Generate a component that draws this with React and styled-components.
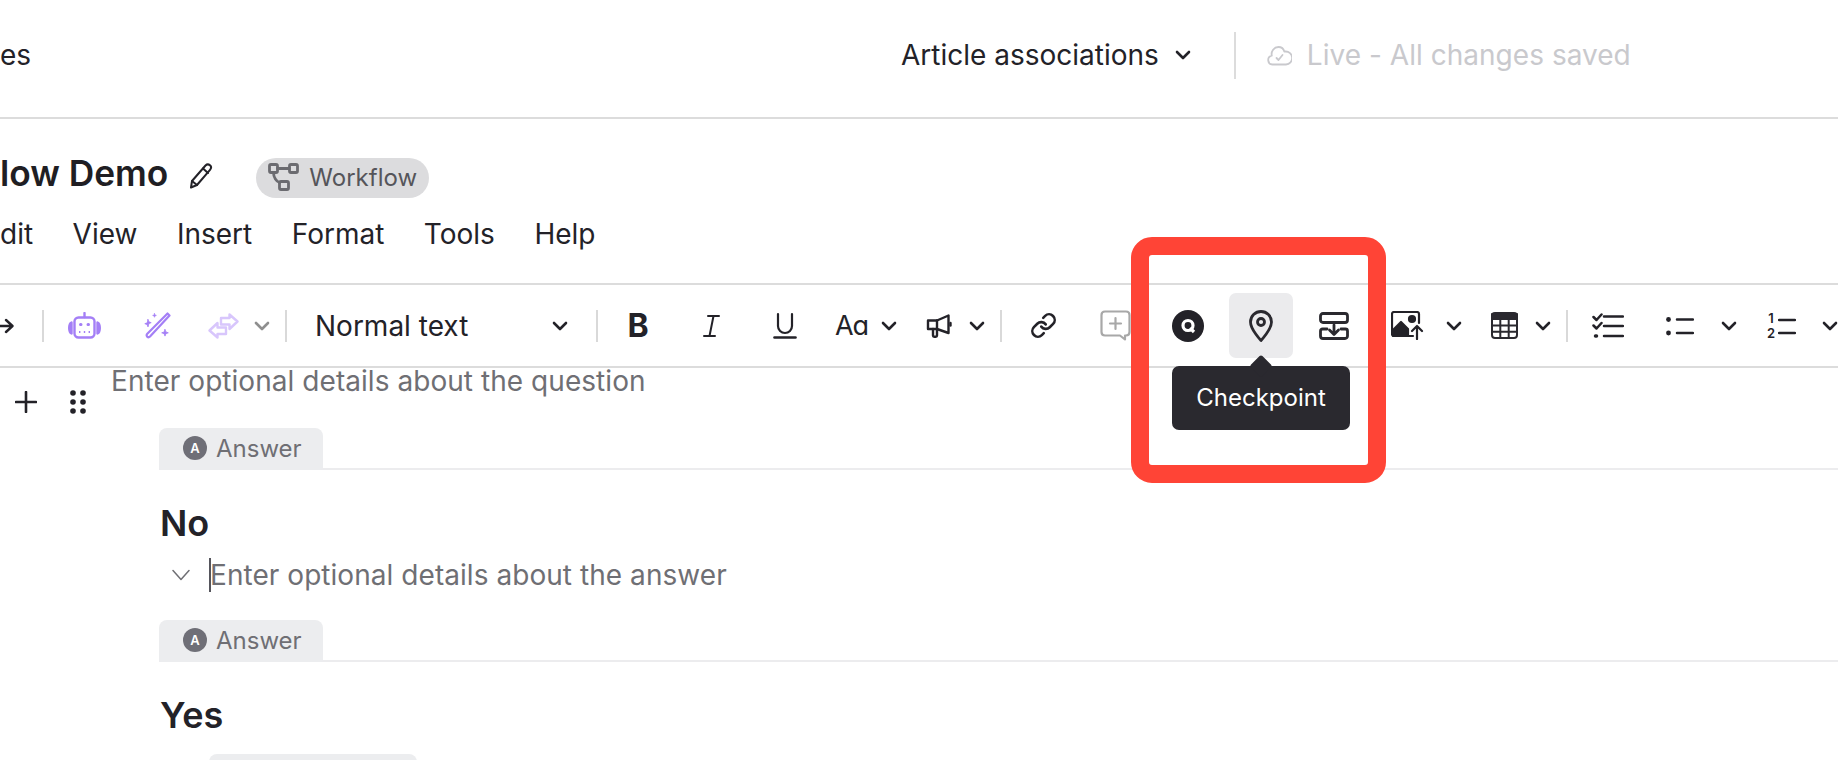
import React from "react";
import styled, { createGlobalStyle } from "styled-components";

const Global = createGlobalStyle`
  html, body { margin: 0; padding: 0; background: #fff; }
  body { font-family: Inter, "Noto Sans", sans-serif; color: #232228; }
`;

const Page = styled.div`
  position: relative;
  width: 1838px;
  height: 760px;
  overflow: hidden;
  background: #fff;
`;

const TopBar = styled.header`
  height: 117px;
  box-sizing: content-box;
  border-bottom: 2px solid #dcdcdc;
  display: flex;
  align-items: center;
`;
const TopInner = styled.div`
  display: flex;
  align-items: center;
  width: 100%;
  margin-top: -7px;
`;
const Crumb = styled.div`
  font-size: 28px;
  width: 901px;
  flex: none;
  color: #232228;
`;
const AssocLabel = styled.span`
  font-size: 28px;
`;
const TopDivider = styled.span`
  width: 2px;
  height: 47px;
  background: #dcdcdc;
  margin-left: 43px;
  margin-right: 31px;
`;
const LiveText = styled.span`
  font-size: 28px;
  color: #c9c9cd;
  margin-left: 15px;
  letter-spacing: 0.03px;
`;

const TitleBlock = styled.section`
  height: 164px;
  display: flex;
  flex-direction: column;
  border-bottom: 2px solid #dcdcdc;
`;
const TitleRow = styled.div`
  display: flex;
  align-items: center;
  height: 40px;
  margin-top: 39px;
`;
const Title = styled.h1`
  margin: -9px 0 0 0;
  font-size: 35.3px;
  font-weight: 600;
  color: #1f1e23;
  white-space: nowrap;
`;
const PencilWrap = styled.span`
  display: flex;
  margin-left: 21px;
  margin-top: -5px;
`;
const Pill = styled.span`
  display: inline-flex;
  align-items: center;
  height: 40px;
  width: 173px;
  box-sizing: border-box;
  margin-left: 43px;
  padding: 0 0 2px 12px;
  gap: 10px;
  border-radius: 20px;
  background: #dcdcde;
  color: #55555a;
  font-size: 24px;
`;
const MenuRow = styled.nav`
  display: flex;
  margin-top: 19px;
  font-size: 28px;
  gap: 39.5px;
  color: #232228;
`;

const Toolbar = styled.div`
  height: 83px;
  box-sizing: border-box;
  display: flex;
  align-items: center;
  border-bottom: 2px solid #dcdcdc;
`;
const Cell = styled.span`
  flex: none;
  width: ${p => p.$w}px;
  margin-left: ${p => p.$ml || 0}px;
  height: 40px;
  display: flex;
  align-items: center;
  justify-content: ${p => (p.$start ? "flex-start" : "center")};
  color: #232228;
  svg { flex: none; display: block; }
`;
const ActiveCell = styled.span`
  flex: none;
  position: relative;
  width: 64px;
  height: 65px;
  display: flex;
  align-items: center;
  justify-content: center;
  border-radius: 7px;
  background: #ebebed;
`;
const Sep = styled.span`
  flex: none;
  width: 2px;
  height: 32px;
  background: #d9d9d9;
  margin-left: ${p => p.$ml || 0}px;
`;
const StyleSelect = styled.span`
  flex: none;
  width: 309px;
  box-sizing: border-box;
  padding: 0 28px;
  display: flex;
  align-items: center;
  justify-content: space-between;
  font-size: 28px;
  color: #232228;
`;
const GlyphB = styled.span`
  font-size: 32px;
  font-weight: 700;
`;
const Case = styled.span`
  font-size: 27px;
  letter-spacing: -1px;
  color: #232228;
`;
const NumSmall = styled.span`
  font-size: 13px;
  font-weight: 600;
  line-height: 15px;
  display: flex;
  flex-direction: column;
  align-items: center;
  margin-right: 3px;
`;

const Tooltip = styled.div`
  position: absolute;
  left: -57px;
  top: 73px;
  width: 178px;
  height: 64px;
  box-sizing: border-box;
  padding-bottom: 2px;
  border-radius: 7px;
  background: #2a292f;
  color: #fff;
  font-size: 24px;
  display: flex;
  align-items: center;
  justify-content: center;
  z-index: 3;
  &::before {
    content: "";
    position: absolute;
    left: 81px;
    top: -8px;
    width: 16px;
    height: 16px;
    background: #2a292f;
    transform: rotate(45deg);
    border-radius: 2px;
  }
`;
const Highlight = styled.div`
  position: absolute;
  left: 1131px;
  top: 237px;
  width: 255px;
  height: 246px;
  box-sizing: border-box;
  border: 18px solid #ff4436;
  border-radius: 21px;
  z-index: 4;
  pointer-events: none;
`;

const QuestionRow = styled.div`
  display: flex;
  height: 60px;
`;
const Gutter = styled.div`
  width: 111px;
  flex: none;
  display: flex;
  align-items: center;
  align-self: flex-start;
  padding: 22px 0 0 15px;
  box-sizing: border-box;
  gap: 33px;
`;
const Placeholder = styled.div`
  font-size: 28px;
  letter-spacing: 0.05px;
  color: #6f6f74;
  line-height: 26px;
  white-space: nowrap;
`;
const AnswerHead = styled.div`
  display: flex;
  margin-left: 159px;
  border-bottom: 2px solid #ececee;
  height: 42px;
  box-sizing: border-box;
  margin-top: ${p => p.$mt || 0}px;
`;
const AnswerTab = styled.div`
  width: 164px;
  height: 42px;
  flex: none;
  box-sizing: border-box;
  padding: 0 0 2px 24px;
  gap: 9px;
  display: flex;
  align-items: center;
  background: #ecedef;
  border-radius: 8px 8px 2px 2px;
  color: #6f6f74;
  font-size: 24px;
`;
const AnswerBadge = styled.span`
  width: 24px;
  height: 24px;
  border-radius: 50%;
  background: #6f6f77;
  color: #fff;
  font-size: 13px;
  font-weight: 600;
  display: flex;
  align-items: center;
  justify-content: center;
`;
const AnswerTitle = styled.h2`
  margin: ${p => p.$mt}px 0 0 160px;
  font-size: 36px;
  line-height: 40px;
  font-weight: 600;
  color: #232228;
`;
const DetailRow = styled.div`
  display: flex;
  align-items: center;
  height: 36px;
  margin: 14px 0 0 172px;
`;
const Caret = styled.span`
  width: 2px;
  height: 34px;
  background: #55555c;
  margin: 0 -1px 0 19px;
`;
const StubRow = styled.div`
  margin: 19px 0 0 209px;
  width: 208px;
  height: 30px;
  border-radius: 8px 8px 0 0;
  background: #ecedef;
`;

const Svg = ({ w, h, children, color = "currentColor", sw = 2.4, fill = "none", vb }) => (
  <svg width={w} height={h} viewBox={vb || `0 0 ${w} ${h}`} fill={fill} stroke={color} strokeWidth={sw} strokeLinecap="round" strokeLinejoin="round">{children}</svg>
);
const Chevron = ({ color }) => (
  <Svg w={16} h={10} color={color} sw={2.6}><path d="M2 2l6 6 6-6" /></Svg>
);
const Arrow = () => (
  <Svg w={14} h={18}><path d="M0 9h12M6 3l6.5 6L6 15" /></Svg>
);
const Robot = () => (
  <Svg w={33} h={27} color="#a47ff6" sw={2.4}>
    <path d="M16.500 1v4" />
    <rect x="6.500" y="5.500" width="20" height="20" rx="4" />
    <path d="M3.500 10.500c-1.500.6-2.300 2-2.300 5.500s.8 4.900 2.300 5.500z" fill="#a47ff6" />
    <path d="M29.500 10.500c1.500.6 2.300 2 2.300 5.500s-.8 4.900-2.300 5.500z" fill="#a47ff6" />
    <path d="M12.500 12.500h.5M20 12.500h.5" strokeWidth="3" />
    <path d="M11 20h1.400M15.800 20h1.400M20.600 20H22" strokeWidth="1.800" strokeLinecap="butt" />
  </Svg>
);
const Wand = () => (
  <Svg w={27} h={27} color="#a47ff6" sw={2.2}>
    <path d="M23.500 1.500l2 2L6 24.500c-.9.900-2 .9-2.800.1s-.8-1.900.1-2.800z" />
    <path d="M4 7.500l.9 2.300 2.300.9-2.300.9L4 14.900l-.9-2.300-2.300-.9 2.300-.9z" fill="#a47ff6" strokeWidth="0.8" />
    <path d="M10.500 1.500l.5 1.400 1.400.5-1.400.5-.5 1.400-.5-1.400-1.400-.5 1.400-.5z" fill="#a47ff6" strokeWidth="0.6" />
    <path d="M21 17.500l.9 2.400 2.400.9-2.400.9L21 24.100l-.9-2.400-2.400-.9 2.400-.9z" fill="#a47ff6" strokeWidth="0.8" />
  </Svg>
);
const Swap = () => (
  <Svg w={31} h={26} color="#d8c6fc" sw={2.400}>
    <path d="M1.500 17.500l8-7.500v4.500h8.500V21H9.500v3.500z" />
    <path d="M29.500 8.500l-8 7.500v-4.500H13V5h8.500V1.500z" />
  </Svg>
);
const Italic = () => (
  <Svg w={17} h={24} sw={2}><path d="M5 2h11M1 22h11M10.500 2L6.500 22" /></Svg>
);
const Underline = () => (
  <Svg w={24} h={27} sw={2.200}>
    <path d="M5 2v12a7 7 0 0 0 14 0V2" />
    <path d="M1.500 25.500h21" strokeWidth="2.600" />
  </Svg>
);
const Megaphone = () => (
  <Svg w={26} h={24} sw={2.400}>
    <path d="M2 6.500h9L22.500 1.500v17.500L11 15H2z" />
    <path d="M11 6.500V15M7 15v6.500c0 .8.400 1.200 1.200 1.200h1.600c.8 0 1.200-.4 1.200-1.200V15" />
    <path d="M24.500 9v2.500" />
  </Svg>
);
const LinkIcon = () => (
  <Svg w={27} h={27} sw={2.300} vb="0 0 24 24">
    <path d="M10 13a5 5 0 0 0 7.540.54l3-3a5 5 0 0 0-7.070-7.070l-1.720 1.710" />
    <path d="M14 11a5 5 0 0 0-7.540-.54l-3 3a5 5 0 0 0 7.070 7.070l1.710-1.710" />
  </Svg>
);
const CommentPlus = () => (
  <Svg w={31} h={31} color="#a8a8a8" sw={2.200}>
    <path d="M5 1.500h21c2 0 3.500 1.500 3.500 3.500v17c0 2-1.500 3.500-3.500 3.500h-1v4l-5-4H5c-2 0-3.500-1.500-3.500-3.500V5C1.500 3 3 1.500 5 1.500z" />
    <path d="M15.500 8v11M10 13.500h11" />
  </Svg>
);
const QBadge = () => (
  <svg width="32" height="32" viewBox="0 0 32 32">
    <circle cx="16" cy="16" r="16" fill="#232228" />
    <circle cx="16" cy="15.500" r="5" fill="none" stroke="#fff" strokeWidth="3.200" />
    <path d="M18 18l4 4" stroke="#fff" strokeWidth="3.200" />
  </svg>
);
const Pin = () => (
  <Svg w={24} h={32} sw={2.800} color="#2a292f">
    <path d="M12 30.500S1.500 19.500 1.500 12a10.500 10.500 0 0 1 21 0C22.500 19.500 12 30.500 12 30.500z" />
    <circle cx="12" cy="12" r="3.500" />
  </Svg>
);
const PageBreak = () => (
  <Svg w={30} h={28} sw={2.800} color="#2a292f">
    <rect x="1.500" y="1.500" width="27" height="9" rx="2.500" />
    <path d="M8 17H3.500a2 2 0 0 0-2 2v5a2.500 2.500 0 0 0 2.500 2.500h22a2.500 2.500 0 0 0 2.500-2.500v-5a2 2 0 0 0-2-2H22" />
    <path d="M15 13v9M10.500 18l4.500 4.500 4.500-4.500" />
  </Svg>
);
const ImageUp = () => (
  <Svg w={33} h={29} sw={2.200} color="#232228">
    <path d="M22 25H3a2 2 0 0 1-2-2V3a2 2 0 0 1 2-2h23a2 2 0 0 1 2 2v9" />
    <path d="M2 25V19l8-8 7 7v7z" fill="#232228" />
    <circle cx="21" cy="8" r="3" fill="#232228" />
    <path d="M26 28V15M21 20l5-5 5 5" />
  </Svg>
);
const Table = () => (
  <Svg w={27} h={27} sw={2} color="#2a292f">
    <rect x="1" y="1" width="25" height="25" rx="3" />
    <path d="M1 2h25v5H1z" fill="#2a292f" />
    <path d="M1 13.500h25M1 19.800h25M9.300 7v19M17.700 7v19" />
  </Svg>
);
const Checklist = () => (
  <Svg w={32} h={26} sw={2.500}>
    <path d="M1.500 4l3 3 5-5.500M1.500 12.500l3 3 5-5.500" />
    <path d="M12 3.500h19M12 13h19M12 23h19" />
    <path d="M3.500 23h1" strokeWidth="3.500" />
  </Svg>
);
const Bullets = () => (
  <Svg w={28} h={20} sw={2.500}>
    <circle cx="2.500" cy="3.500" r="2.400" fill="#232228" stroke="none" />
    <circle cx="2.500" cy="17" r="2.400" fill="#232228" stroke="none" />
    <path d="M11 3.500h16M11 17h16" />
  </Svg>
);
const Numbers = () => (
  <>
    <NumSmall><span>1</span><span>2</span></NumSmall>
    <Svg w={18} h={20} sw={2.500}><path d="M1 4h16M1 17h16" /></Svg>
  </>
);
const Pencil = () => (
  <Svg w={24} h={26} sw={2} color="#232228">
    <path d="M16.500 2.500c1.500-1.500 3-1.500 4.500-.2s1.300 3 0 4.500L8 22l-6 2.500 1-6.500z" />
    <path d="M14 5.500l5 4.500M3 18l5 4" />
  </Svg>
);
const FlowIcon = () => (
  <Svg w={31} h={28} sw={2.800} color="#6b6b70">
    <rect x="1.500" y="1.500" width="8" height="8" rx="1.500" />
    <rect x="21.500" y="1.500" width="8" height="8" rx="1.500" />
    <rect x="11.500" y="18.500" width="9" height="8" rx="1.500" />
    <path d="M9.500 5.500h12M5.500 9.500c0 5 3 9 6 10" />
  </Svg>
);
const Cloud = () => (
  <Svg w={25} h={21} sw={1.800} color="#c9c9cd">
    <path d="M7 19.500H5.500a4.500 4.500 0 0 1-.7-8.900A7 7 0 0 1 11.500 2a6 6 0 0 1 5.800 4.500h1a6.500 6.500 0 0 1 .7 13z" />
    <path d="M9.500 13l2 2 4-5" />
  </Svg>
);
const Plus = () => (
  <Svg w={22} h={22} sw={2.600}><path d="M11 1v20M1 11h20" /></Svg>
);
const Dots = () => (
  <svg width="16" height="24" viewBox="0 0 16 24" fill="#232228">
    {[3, 12, 21].map(y => [3, 13].map(x => <circle key={`${x}${y}`} cx={x} cy={y} r="2.800" />))}
  </svg>
);
const ThinChevron = () => (
  <Svg w={18} h={12} sw={1.500} color="#6f6f74"><path d="M1 1.500l8 9 8-9" /></Svg>
);

export default function App() {
  return (
    <Page>
      <Global />
      <TopBar>
        <TopInner>
          <Crumb>es</Crumb>
          <AssocLabel>Article associations</AssocLabel>
          <Cell $w={16} $ml={16}><Chevron /></Cell>
          <TopDivider />
          <Cloud />
          <LiveText>Live - All changes saved</LiveText>
        </TopInner>
      </TopBar>
      <TitleBlock>
        <TitleRow>
          <Title>low Demo</Title>
          <PencilWrap><Pencil /></PencilWrap>
          <Pill><FlowIcon />Workflow</Pill>
        </TitleRow>
        <MenuRow>
          <span>dit</span><span>View</span><span>Insert</span><span>Format</span><span>Tools</span><span>Help</span>
        </MenuRow>
      </TitleBlock>
      <Toolbar>
        <Cell $w={42} $start><Arrow /></Cell>
        <Sep />
        <Cell $w={80}><Robot /></Cell>
        <Cell $w={67}><Wand /></Cell>
        <Cell $w={64}><Swap /></Cell>
        <Cell $w={14}><Chevron color="#8f8f8f" /></Cell>
        <Sep $ml={16} />
        <StyleSelect>Normal text<Chevron /></StyleSelect>
        <Sep />
        <Cell $w={80}><GlyphB>B</GlyphB></Cell>
        <Cell $w={66}><Italic /></Cell>
        <Cell $w={81}><Underline /></Cell>
        <Cell $w={53}><Case>Aɑ</Case></Cell>
        <Cell $w={15} $ml={3}><Chevron /></Cell>
        <Cell $w={62} $ml={12}><Megaphone /></Cell>
        <Cell $w={14}><Chevron /></Cell>
        <Sep $ml={16} />
        <Cell $w={82}><LinkIcon /></Cell>
        <Cell $w={62}><CommentPlus /></Cell>
        <Cell $w={83}><QBadge /></Cell>
        <ActiveCell>
          <Pin />
          <Tooltip>Checkpoint</Tooltip>
        </ActiveCell>
        <Cell $w={82}><PageBreak /></Cell>
        <Cell $w={64}><ImageUp /></Cell>
        <Cell $w={30}><Chevron /></Cell>
        <Cell $w={54} $ml={8}><Table /></Cell>
        <Cell $w={23}><Chevron /></Cell>
        <Sep $ml={12} />
        <Cell $w={80}><Checklist /></Cell>
        <Cell $w={63}><Bullets /></Cell>
        <Cell $w={35}><Chevron /></Cell>
        <Cell $w={71}><Numbers /></Cell>
        <Cell $w={26}><Chevron /></Cell>
      </Toolbar>
      <QuestionRow>
        <Gutter><Plus /><Dots /></Gutter>
        <Placeholder>Enter optional details about the question</Placeholder>
      </QuestionRow>
      <AnswerHead>
        <AnswerTab><AnswerBadge>A</AnswerBadge>Answer</AnswerTab>
      </AnswerHead>
      <AnswerTitle $mt={33}>No</AnswerTitle>
      <DetailRow>
        <ThinChevron />
        <Caret />
        <Placeholder>Enter optional details about the answer</Placeholder>
      </DetailRow>
      <AnswerHead $mt={27}>
        <AnswerTab><AnswerBadge>A</AnswerBadge>Answer</AnswerTab>
      </AnswerHead>
      <AnswerTitle $mt={33}>Yes</AnswerTitle>
      <StubRow />
      <Highlight />
    </Page>
  );
}
